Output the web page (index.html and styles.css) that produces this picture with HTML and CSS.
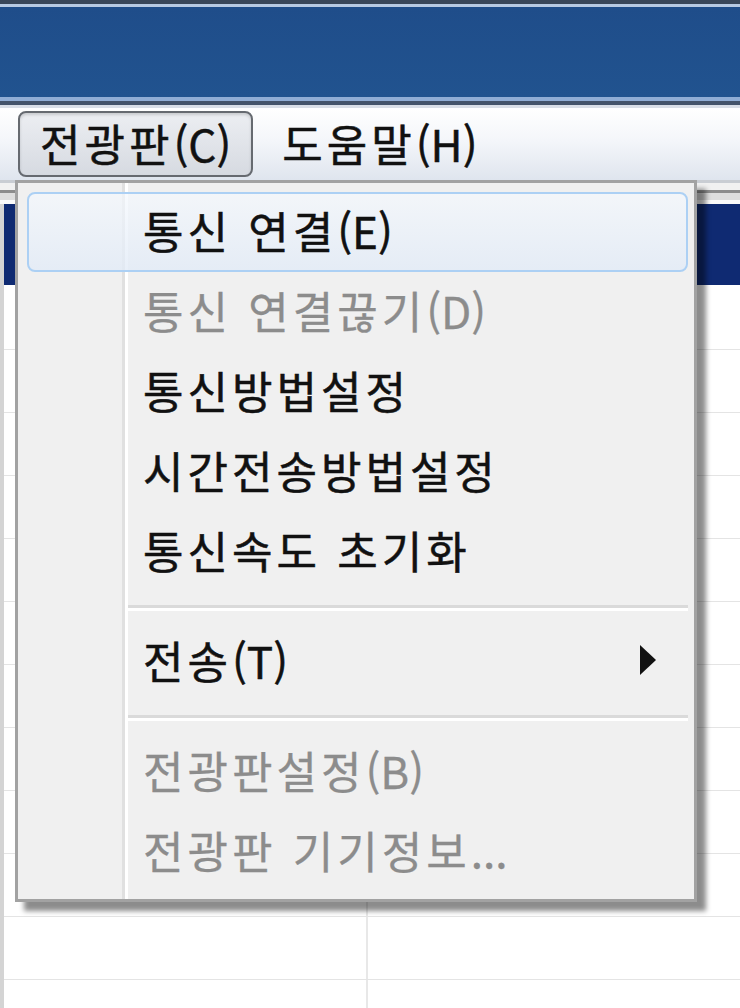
FILE: index.html
```html
<!DOCTYPE html>
<html lang="ko">
<head>
    <meta charset="UTF-8">
    <title>전광판</title>
    <link rel="stylesheet" href="styles.css">
</head>
<body>
    <div class="window">
        <div class="titlebar"></div>

        <div class="menubar">
            <div class="menubar-item active">전광판<span class="key">(C)</span></div>
            <div class="menubar-item">도움말<span class="key">(H)</span></div>
        </div>

        <div class="toolbar"></div>

        <div class="grid">
            <div class="grid-header"></div>
            <div class="grid-row first"><div class="cell"></div><div class="cell"></div></div>
            <div class="grid-row"><div class="cell"></div><div class="cell"></div></div>
            <div class="grid-row"><div class="cell"></div><div class="cell"></div></div>
            <div class="grid-row"><div class="cell"></div><div class="cell"></div></div>
            <div class="grid-row"><div class="cell"></div><div class="cell"></div></div>
            <div class="grid-row"><div class="cell"></div><div class="cell"></div></div>
            <div class="grid-row"><div class="cell"></div><div class="cell"></div></div>
            <div class="grid-row"><div class="cell"></div><div class="cell"></div></div>
            <div class="grid-row"><div class="cell"></div><div class="cell"></div></div>
            <div class="grid-row"><div class="cell"></div><div class="cell"></div></div>
            <div class="grid-row"><div class="cell"></div><div class="cell"></div></div>
            <div class="grid-row"><div class="cell"></div><div class="cell"></div></div>
        </div>

        <!-- dropdown of 전광판(C) -->
        <div class="dropdown">
            <div class="menu-item hover"><span>통신 연결<span class="key">(E)</span></span></div>
            <div class="menu-item disabled"><span>통신 연결끊기<span class="key">(D)</span></span></div>
            <div class="menu-item"><span>통신방법설정</span></div>
            <div class="menu-item"><span>시간전송방법설정</span></div>
            <div class="menu-item"><span>통신속도 초기화</span></div>
            <div class="separator"></div>
            <div class="menu-item submenu">
                <span>전송<span class="key">(T)</span></span>
                <svg class="arrow" width="18" height="32" viewBox="0 0 18 32">
                    <polygon points="1,1 17,16 1,31" fill="#111"/>
                </svg>
            </div>
            <div class="separator"></div>
            <div class="menu-item disabled"><span>전광판설정<span class="key">(B)</span></span></div>
            <div class="menu-item disabled"><span>전광판 기기정보<span class="key">...</span></span></div>
        </div>
    </div>
</body>
</html>
```

FILE: styles.css
```css
body {
    margin: 0;
    padding: 0;
    background-color: #ffffff;
    font-family: "Noto Sans CJK KR", "Noto Sans", sans-serif;
}

.window {
    position: relative;
    width: 740px;
    height: 1008px;
    overflow: hidden;
}

.titlebar {
    height: 108px;
    background: linear-gradient(to bottom,
        #39475a 0px, #39475a 4px,
        #b7cae3 4px, #b7cae3 7px,
        #1f4d8a 7px, #21538f 97px,
        #90add5 97px, #90add5 101px,
        #44536a 101px, #44536a 105px,
        #d9dee7 105px, #d9dee7 108px);
}

.menubar {
    height: 72px;
    display: flex;
    align-items: center;
    gap: 7px;
    padding-left: 18px;
    box-sizing: border-box;
    background: linear-gradient(to bottom, #ffffff 0%, #f4f6fa 45%, #dfe5ee 100%);
}

.menubar-item {
    height: 66px;
    padding: 0 20px 3px 20px;
    box-sizing: border-box;
    border: 2px solid transparent;
    border-radius: 8px;
    display: flex;
    align-items: center;
    font-size: 44px;
    letter-spacing: 4px;
    color: #111111;
    -webkit-text-stroke: 0.5px #111111;
}

.menubar-item.active {
    border-color: #666a70;
    background: linear-gradient(to bottom, #eceef2, #d6dae1);
    box-shadow: inset 0 2px 3px rgba(0, 0, 0, 0.15);
}

.key {
    letter-spacing: 0;
}

.toolbar {
    height: 24px;
    background: linear-gradient(to bottom,
        #c9cdd3 0px, #c9cdd3 3px,
        #f1f1f1 3px, #f1f1f1 10px,
        #8d8d8d 10px, #8d8d8d 13px,
        #dedede 13px, #dedede 20px,
        #fafafa 20px, #fafafa 24px);
}

.grid {
    border-left: 4px solid #d4d4d4;
}

.grid-header {
    height: 81px;
    background-color: #0f2a72;
}

.grid-row {
    display: grid;
    grid-template-columns: 364px 1fr;
    height: 63px;
    border-bottom: 1px solid #e4e4e4;
    box-sizing: border-box;
}

.grid-row.first {
    height: 65px;
}

.cell {
    border-right: 2px solid #e8e8e8;
}

.cell:last-child {
    border-right: none;
}

/* dropdown menu */
.dropdown {
    position: absolute;
    left: 15px;
    top: 180px;
    width: 682px;
    height: 722px;
    box-sizing: border-box;
    padding: 9px 6px 6px 9px;
    border: 3px solid #a2a2a2;
    background-color: #f0f0f0;
    background-image: linear-gradient(to right,
        transparent 104px,
        #e0e0e0 104px, #e0e0e0 107px,
        #ffffff 107px, #ffffff 110px,
        transparent 110px);
    box-shadow: 9px 9px 5px rgba(0, 0, 0, 0.45);
}

.menu-item {
    height: 80px;
    box-sizing: border-box;
    padding: 0 29px 5px 114px;
    display: flex;
    align-items: center;
    justify-content: space-between;
    font-size: 44px;
    letter-spacing: 4px;
    color: #111111;
    -webkit-text-stroke: 0.5px #111111;
    border: 2px solid transparent;
    border-radius: 8px;
}

.menu-item.hover {
    border-color: #acd0f4;
    background: linear-gradient(to bottom, rgba(244, 248, 253, 0.7), rgba(226, 235, 247, 0.8));
}

.menu-item.disabled {
    color: #8c8c8c;
    -webkit-text-stroke: 0.3px #8c8c8c;
}

.separator {
    height: 30px;
    margin-left: 101px;
    background: linear-gradient(to bottom,
        transparent 13px,
        #dadada 13px, #dadada 16px,
        #ffffff 16px, #ffffff 19px,
        transparent 19px);
}

.arrow {
    display: block;
}
```
